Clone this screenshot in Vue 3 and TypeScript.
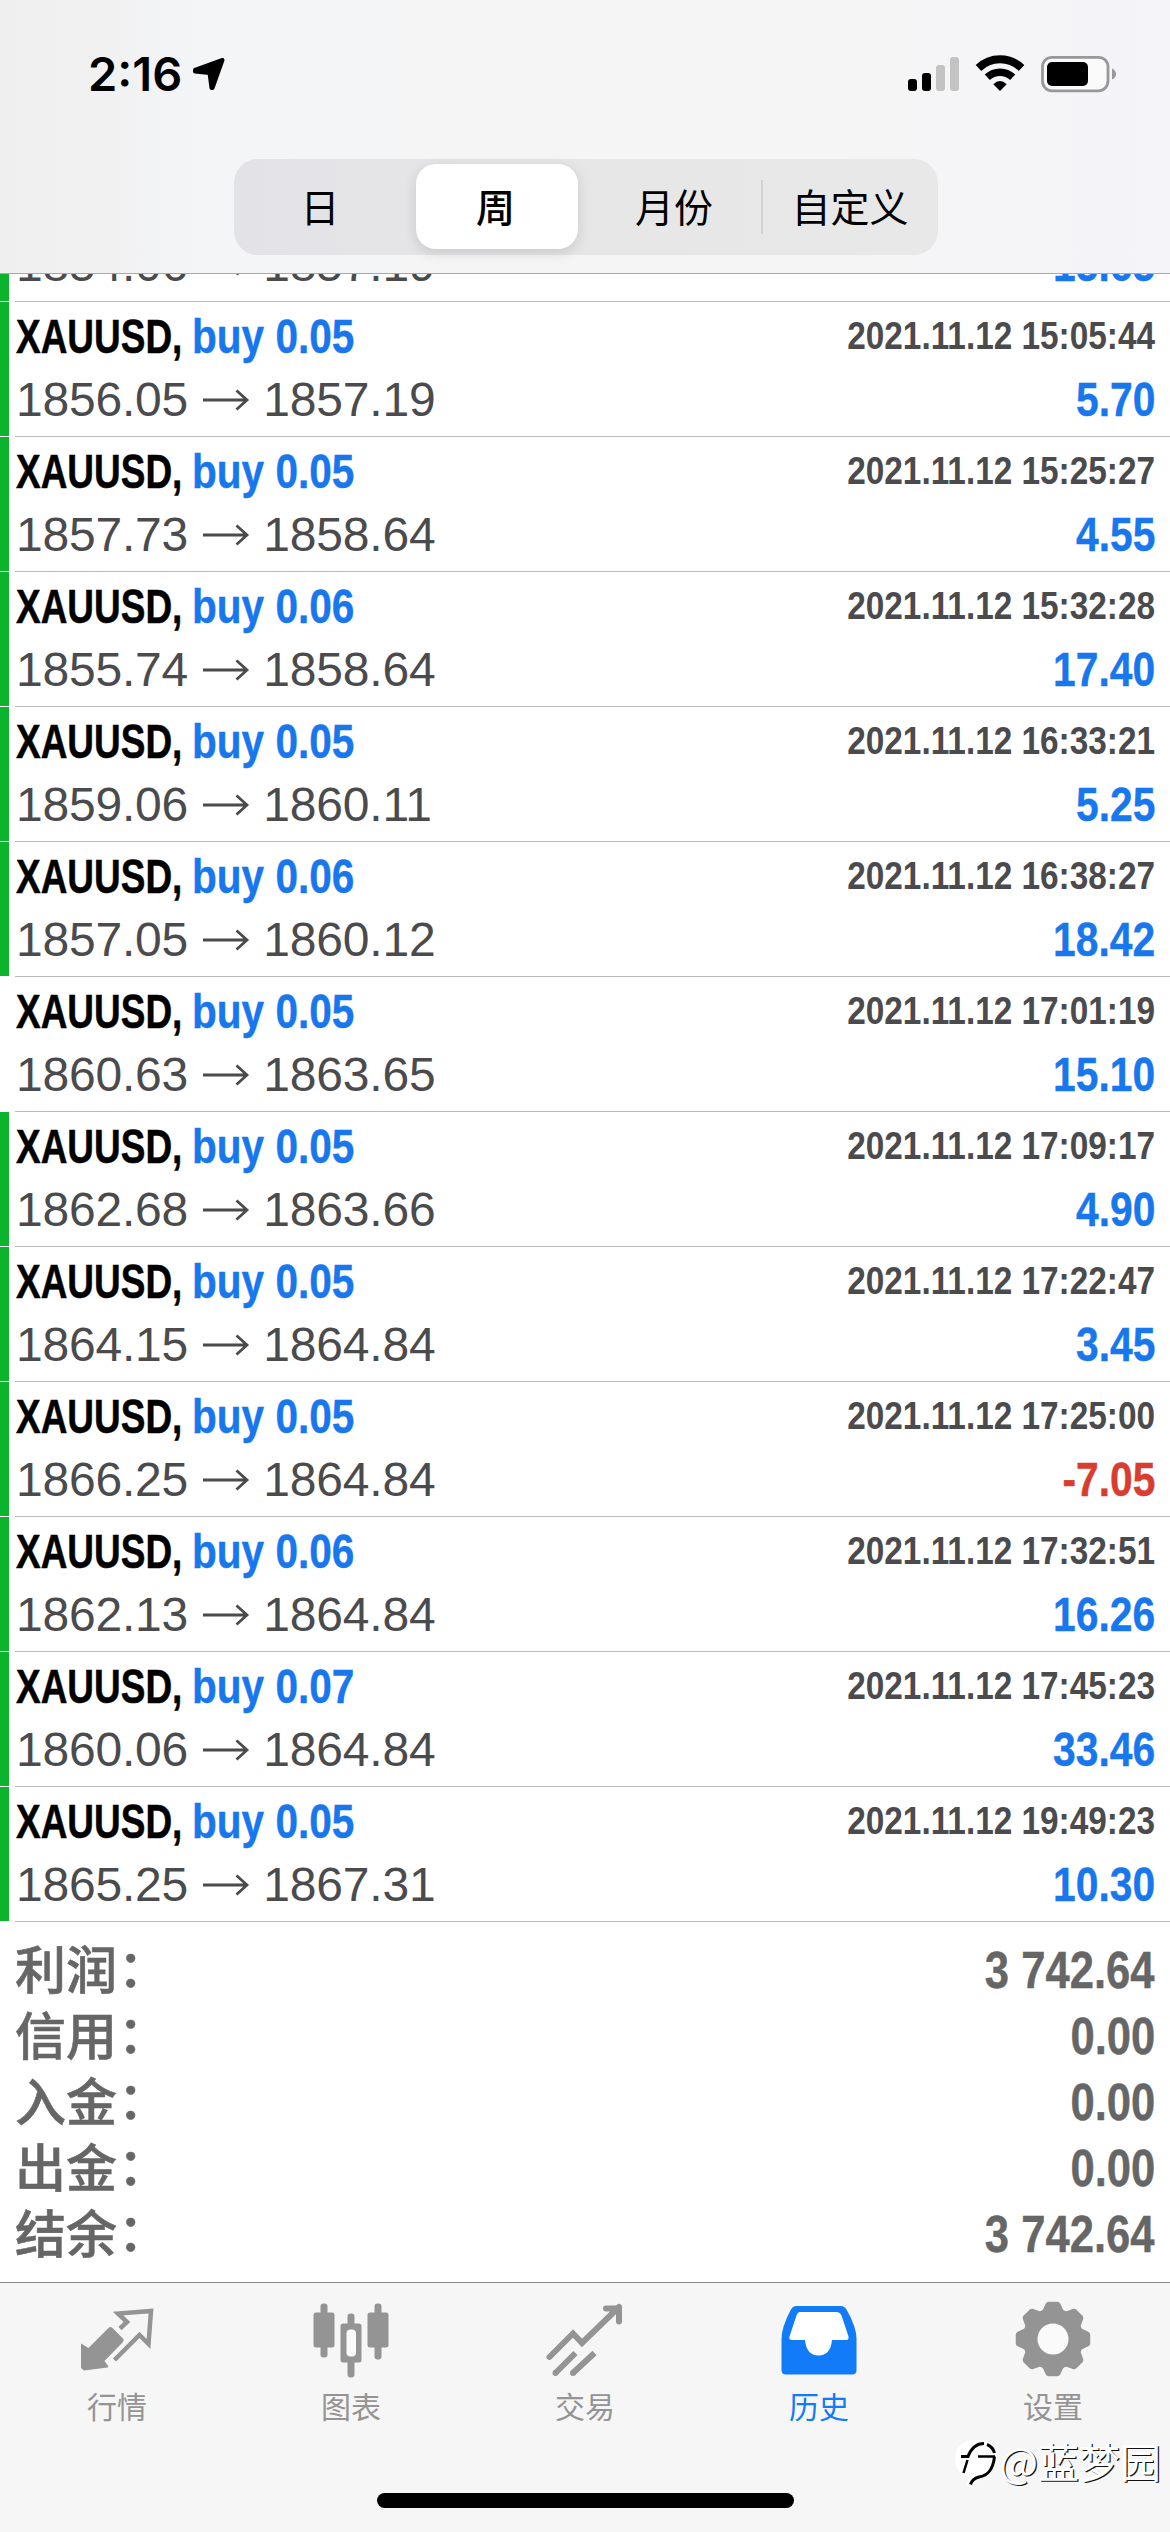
<script setup lang="ts">
interface Deal {
  volume: string
  open: string
  close: string
  time: string
  profit: string
  marked: boolean
}

const deal = (
  volume: string,
  open: string,
  close: string,
  time: string,
  profit: string,
  marked = true,
): Deal => ({ volume, open, close, time: time && `2021.11.12 ${time}`, profit, marked })

// The first entry is scrolled half under the header, so only its price line is present
const deals: Deal[] = [
  deal('', '1854.06', '1857.19', '', '15.65'),
  deal('0.05', '1856.05', '1857.19', '15:05:44', '5.70'),
  deal('0.05', '1857.73', '1858.64', '15:25:27', '4.55'),
  deal('0.06', '1855.74', '1858.64', '15:32:28', '17.40'),
  deal('0.05', '1859.06', '1860.11', '16:33:21', '5.25'),
  deal('0.06', '1857.05', '1860.12', '16:38:27', '18.42'),
  deal('0.05', '1860.63', '1863.65', '17:01:19', '15.10', false),
  deal('0.05', '1862.68', '1863.66', '17:09:17', '4.90'),
  deal('0.05', '1864.15', '1864.84', '17:22:47', '3.45'),
  deal('0.05', '1866.25', '1864.84', '17:25:00', '-7.05'),
  deal('0.06', '1862.13', '1864.84', '17:32:51', '16.26'),
  deal('0.07', '1860.06', '1864.84', '17:45:23', '33.46'),
  deal('0.05', '1865.25', '1867.31', '19:49:23', '10.30'),
]

const periods = ['日', '周', '月份', '自定义']
const activePeriod = 1

const totals = [
  { label: '利润', value: '3 742.64' },
  { label: '信用', value: '0.00' },
  { label: '入金', value: '0.00' },
  { label: '出金', value: '0.00' },
  { label: '结余', value: '3 742.64' },
]

const tabs = [
  { id: 'quotes', label: '行情' },
  { id: 'charts', label: '图表' },
  { id: 'trade', label: '交易' },
  { id: 'history', label: '历史' },
  { id: 'settings', label: '设置' },
]

// Outline of an eight-toothed gear centred in an 80x80 box
const gearPath = (() => {
  const at = (r: number, deg: number) => {
    const a = (deg * Math.PI) / 180
    return `${(40 + r * Math.cos(a)).toFixed(2)} ${(40 + r * Math.sin(a)).toFixed(2)}`
  }
  let d = ''
  for (let i = 0; i < 8; i++) {
    const c = i * 45
    d += `${i ? 'L' : 'M'}${at(28, c - 15)}L${at(34, c - 7)}L${at(34, c + 7)}L${at(28, c + 15)}`
    d += `Q${at(26, c + 22.5)} ${at(28, c + 30)}`
  }
  return d + 'Z'
})()
</script>

<template>
  <div class="screen">
    <header class="header">
      <div class="status">
        <div class="clock">
          <span class="time">2:16</span>
          <svg class="location" width="33" height="34" viewBox="0 0 33 34">
            <path d="M30.500 3L20.500 31L19.500 31L17.500 16L3 14.500L3 13Z" stroke="#000" stroke-width="4" stroke-linejoin="round" />
          </svg>
        </div>
        <svg width="210" height="40" viewBox="905 54 210 40">
          <rect x="907" y="79" width="9" height="12" rx="3" />
          <rect x="921" y="73" width="9" height="18" rx="3" />
          <rect x="935" y="65" width="9" height="26" rx="3" fill="#c3c3c4" />
          <rect x="949" y="57" width="9" height="34" rx="3" fill="#c3c3c4" />
          <g fill="none" stroke="#000">
            <path d="M977.500 68A31 31 0 0 1 1020.500 68" stroke-width="8" />
            <path d="M986.300 77.300A18.500 18.500 0 0 1 1011.700 77.300" stroke-width="7.500" />
          </g>
          <path d="M999 91L992.300 84.200Q999 78 1005.700 84.200Z" />
          <rect x="1041.500" y="57.300" width="65.500" height="33.500" rx="9.500" fill="#fafafb" stroke="#98989a" stroke-width="2.800" />
          <rect x="1046" y="62" width="41" height="24" rx="5" />
          <path d="M1111 68.500Q1115 70.500 1115 74Q1115 77.500 1111 79.500Z" fill="#98989a" />
        </svg>
      </div>
      <nav class="periods">
        <button
          v-for="(p, i) in periods"
          :key="p"
          class="period"
          :class="{ active: i === activePeriod, divided: i === 3 }"
        >{{ p }}</button>
      </nav>
    </header>

    <main class="deals">
      <article v-for="(d, i) in deals" :key="i" class="deal" :class="{ marked: d.marked }">
        <div class="body">
          <div class="line top">
            <template v-if="d.time">
              <div class="name">
                <span class="symbol"><b>XAUUSD,</b></span>
                <b class="side">buy {{ d.volume }}</b>
              </div>
              <b class="date">{{ d.time }}</b>
            </template>
          </div>
          <div class="line bottom">
            <div class="prices">
              <span>{{ d.open }}</span>
              <svg width="48" height="28" viewBox="0 0 48 28">
                <path d="M1 14H45M34.500 4.500L45 14L34.500 23.500" fill="none" stroke="#4b4b4d" stroke-width="2.800" />
              </svg>
              <span>{{ d.close }}</span>
            </div>
            <b class="profit" :class="{ loss: d.profit.startsWith('-') }">{{ d.profit }}</b>
          </div>
        </div>
      </article>
    </main>

    <section class="totals">
      <div v-for="t in totals" :key="t.label" class="total">
        <span class="label">{{ t.label }}<span class="colon">：</span></span>
        <b class="value">{{ t.value }}</b>
      </div>
    </section>

    <footer class="tabbar">
      <div v-for="t in tabs" :key="t.id" class="tab" :class="{ current: t.id === 'history' }">
        <svg v-if="t.id === 'quotes'" width="80" height="80" viewBox="0 0 80 80">
          <path d="M4 44.500L11.500 49L32 28.500Q33.500 27.500 35 28.500L46 39.500Q47.500 41 46 43L27.500 62L31.500 67.500L30.500 68.500L7 71.500L4 69Z" fill="currentColor" />
          <path d="M43 29.500L50 23L41 14.500L74 12L71.500 45L62.500 36L37.500 61" fill="none" stroke="currentColor" stroke-width="4.500" />
        </svg>
        <svg v-else-if="t.id === 'charts'" width="80" height="80" viewBox="0 0 80 80">
          <g fill="currentColor">
            <rect x="9.500" y="4.500" width="7" height="54" rx="3" />
            <rect x="2.500" y="13.500" width="21" height="35" rx="2.500" />
            <rect x="63.500" y="4.500" width="7" height="56" rx="3" />
            <rect x="56.500" y="13.500" width="21" height="35" rx="2.500" />
            <rect x="36.500" y="14.500" width="7" height="64" rx="3" />
            <rect x="29.500" y="24.500" width="21" height="39" rx="2.500" />
          </g>
          <rect x="35.500" y="30.500" width="9.500" height="27" rx="4" fill="#fafafa" />
        </svg>
        <svg v-else-if="t.id === 'trade'" width="80" height="80" viewBox="0 0 80 80">
          <g fill="none" stroke="currentColor" stroke-width="6">
            <path d="M4.500 58L28 34.500L37 44L74 8" stroke-linecap="round" />
            <path d="M61 9.500H74V22.500" stroke-linecap="round" />
            <path d="M10.500 74L30.500 54M28 74L49.500 54" />
          </g>
          <g fill="currentColor"><circle cx="10.500" cy="74" r="3" /><circle cx="28" cy="74" r="3" /></g>
        </svg>
        <svg v-else-if="t.id === 'history'" width="80" height="80" viewBox="0 0 80 80">
          <path d="M17 7H62Q65.500 7 67.500 10.500Q77.500 28 77.500 40V71Q77.500 75.500 73 75.500H7Q2.500 75.500 2.500 71V40Q2.500 28 12 10.500Q14 7 17 7Z" fill="currentColor" />
          <path d="M21 13H57.500Q61 13 62.500 16.500L69.500 37.500Q70 41 67 41H53Q51.500 56.500 39.500 56.500Q27.500 56.500 26 41H13Q9.500 41 10.500 37.500L17.500 16.500Q18.500 13 21 13Z" fill="#fff" />
        </svg>
        <svg v-else width="80" height="80" viewBox="0 0 80 80">
          <path :d="gearPath" fill="currentColor" stroke="currentColor" stroke-width="7" stroke-linejoin="round" />
          <circle cx="40" cy="40" r="15.500" fill="#fafafa" />
        </svg>
        <span>{{ t.label }}</span>
      </div>
      <div class="home"></div>
    </footer>

    <div class="watermark">
      <svg width="48" height="52" viewBox="0 0 48 52">
        <path d="M4 20Q6 3 26 3Q46 3 46 20Q46 38 27 42L20 50L15 48L18 40Q3 36 4 20Z" fill="#fff" />
        <g fill="none" stroke="#000">
          <path d="M10 19.500H17Q22 6.500 33 6.500" stroke-width="3" />
          <path d="M16.500 23L12.500 36M27 19.500H44" stroke-width="2.500" />
          <path d="M36 7.500Q42 10 43.500 16M43.500 19.500C42 34 36 38.500 28 40Q21 42 19.500 47.500" stroke-width="3" />
        </g>
      </svg>
      <span>@蓝梦园</span>
    </div>
  </div>
</template>

<style>
body {
  margin: 0;
}
</style>

<style scoped>
.screen {
  position: relative;
  display: flex;
  flex-direction: column;
  width: 1170px;
  height: 2532px;
  overflow: hidden;
  background: #fff;
  font-family: "Liberation Sans", "Noto Sans CJK SC", sans-serif;
}

.header {
  box-sizing: border-box;
  flex: none;
  height: 274px;
  border-bottom: 1px solid #a9a9aa;
  background: linear-gradient(90deg, #efefef 0, #f1f1f2 110px, #f4f5f7 200px, #f5f5f6 420px, #f5f5f7 1000px, #f4f4f9 100%);
}

.status {
  display: flex;
  justify-content: space-between;
  box-sizing: border-box;
  height: 159px;
  padding: 54px 54px 0 88px;
}

.clock {
  display: flex;
  gap: 10px;
}

.time {
  width: 94px;
  height: 40px;
  font: 600 47px/40px Inter, sans-serif;
  white-space: nowrap;
}

.location {
  margin-top: 3px;
}

.periods {
  display: flex;
  box-sizing: border-box;
  width: 704px;
  height: 96px;
  margin-left: 234px;
  border-radius: 24px;
  background: linear-gradient(90deg, #e3e3e7, #e6e6e7 40%, #e8e8e9);
}

.period {
  position: relative;
  box-sizing: border-box;
  flex: none;
  width: 168px;
  margin: 5px 4px 6px;
  padding: 0 0 4px;
  border: 0;
  border-radius: 20px;
  background: none;
  color: #000;
  font: 400 39px/56px "Noto Sans CJK SC", sans-serif;
  white-space: nowrap;
}

.period:first-child {
  padding-right: 4px;
}

.period.active {
  width: 162px;
  margin: 5px 8px 6px 6px;
  padding-right: 3px;
  background: #fff;
  font-weight: 500;
  box-shadow: 0 4px 14px rgba(0, 0, 0, 0.13);
}

.period.divided::before {
  content: "";
  position: absolute;
  left: -5px;
  top: 16px;
  width: 2px;
  height: 54px;
  background: #d0d0d3;
}

.deals {
  display: flex;
  flex: none;
  flex-direction: column;
  justify-content: flex-end;
  height: 1648px;
  overflow: hidden;
}

.deal {
  display: flex;
  flex: none;
  box-sizing: border-box;
  height: 135px;
  padding-left: 15px;
}

.deal.marked {
  padding-left: 6px;
}

.deal.marked::before {
  content: "";
  width: 9px;
  height: 134px;
  margin-left: -6px;
  margin-right: 6px;
  background: #0bb42c;
}

.body {
  flex: 1;
  border-bottom: 1px solid #bcbcbc;
}

.line {
  display: flex;
  justify-content: space-between;
  padding-right: 15px;
  white-space: nowrap;
}

.top {
  height: 68px;
}

.bottom {
  height: 59px;
}

.name {
  display: flex;
  padding-left: 1px;
  font-size: 48px;
  line-height: 70px;
}

.symbol {
  width: 176px;
}

.symbol b {
  display: inline-block;
  transform: scaleX(0.77);
  transform-origin: left;
  -webkit-text-stroke: 0.5px currentColor;
}

.side {
  color: #1877ec;
  transform: scaleX(0.845);
  transform-origin: left;
  -webkit-text-stroke: 0.4px currentColor;
}

.date {
  color: #4b4b4d;
  font-size: 39px;
  line-height: 67px;
  transform: scaleX(0.855);
  transform-origin: right;
}

.prices {
  display: flex;
  align-items: center;
  gap: 13.600px;
  padding-left: 1px;
  color: #4b4b4d;
  font-size: 48px;
  line-height: 59px;
  letter-spacing: -0.2px;
}

.profit {
  color: #1877ec;
  font-size: 48px;
  line-height: 59px;
  transform: scaleX(0.85);
  transform-origin: right;
  -webkit-text-stroke: 0.4px currentColor;
}

.profit.loss {
  color: #d83d30;
}

.totals {
  flex: none;
  box-sizing: border-box;
  height: 360px;
  padding: 15px 15px 0;
  color: #666;
}

.total {
  display: flex;
  justify-content: space-between;
  height: 66px;
  line-height: 68px;
}

.label {
  font: 500 51px/60px "Noto Sans CJK SC", sans-serif;
  -webkit-text-stroke: 0.6px currentColor;
}

.colon {
  position: relative;
  top: -2px;
  left: 1px;
}

.value {
  font-size: 51px;
  transform: scaleX(0.855);
  transform-origin: right;
  -webkit-text-stroke: 0.4px currentColor;
}

.tabbar {
  position: relative;
  display: flex;
  box-sizing: border-box;
  height: 250px;
  border-top: 1px solid #8e8e90;
  background: #f6f6f6;
}

.tab {
  display: flex;
  flex: 1;
  flex-direction: column;
  align-items: center;
  padding-top: 16px;
  color: #949494;
  font: 400 30px/44px "Noto Sans CJK SC", sans-serif;
}

.tab span {
  margin-top: 4px;
}

.tab.current {
  color: #117bf8;
}

.home {
  position: absolute;
  left: 377px;
  bottom: 24px;
  width: 417px;
  height: 15px;
  border-radius: 8px;
  background: #000;
}

.watermark {
  position: absolute;
  right: 9px;
  bottom: 38px;
  display: flex;
  align-items: center;
  color: #fff;
  font: 400 41px/58px "Noto Sans CJK SC", sans-serif;
  text-shadow: 1.200px 1.200px 0 #111;
}

.watermark span {
  margin-bottom: 5px;
}
</style>
